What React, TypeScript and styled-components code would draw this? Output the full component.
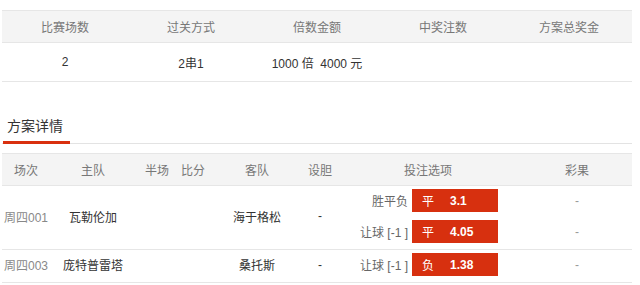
import React from "react";
import styled, { createGlobalStyle } from "styled-components";

const Global = createGlobalStyle`
  html, body { margin: 0; padding: 0; background: #fff; }
  body {
    font-family: "Liberation Sans", "Noto Sans CJK SC", sans-serif;
    font-size: 12px;
    color: #333;
  }
`;

const Page = styled.div`
  width: 630px;
  margin: 10px 8px 0 2px;
`;

const Summary = styled.div`
  border-top: 1px solid #e6e6e6;
`;

const SummaryRow = styled.div<{ $head?: boolean }>`
  display: grid;
  grid-template-columns: repeat(5, 1fr);
  height: ${(p) => (p.$head ? 31 : 38)}px;
  align-items: center;
  background: ${(p) => (p.$head ? "#f4f4f4" : "#fff")};
  border-bottom: 1px solid #e6e6e6;
  color: ${(p) => (p.$head ? "#777" : "#333")};
`;

const Cell = styled.div`
  text-align: center;
  white-space: pre;
`;

const TabBar = styled.div`
  margin-top: 24px;
  display: flex;
  border-bottom: 1px solid #e3e3e3;
`;

const Tab = styled.div`
  width: 63px;
  margin-left: 1px;
  padding: 10px 0 5px 4px;
  line-height: 20px;
  font-size: 14px;
  color: #333;
  border-bottom: 3px solid #d9300f;
  margin-bottom: -1px;
`;

const Detail = styled.div`
  margin-top: 9px;
  border-top: 1px solid #e6e6e6;
`;

const cols = "48px 86px 42px 30px 98px 28px 188px 110px";

const HeadRow = styled.div`
  display: grid;
  grid-template-columns: ${cols};
  height: 31px;
  align-items: center;
  background: #f4f4f4;
  border-bottom: 1px solid #e6e6e6;
  color: #777;
  text-align: center;
`;

const BodyRow = styled.div<{ $n: number }>`
  display: grid;
  grid-template-columns: ${cols};
  grid-template-rows: repeat(${(p) => p.$n}, 23px);
  row-gap: 8px;
  padding: 3px 0 6px;
  border-bottom: 1px solid #e6e6e6;
`;

const Span = styled.div<{ $n: number; $col: number; $tone?: "gray" | "dark" }>`
  grid-column: ${(p) => p.$col};
  grid-row: 1 / span ${(p) => p.$n};
  align-self: center;
  text-align: center;
  color: ${(p) => (p.$tone === "gray" ? "#888" : "#333")};
`;

const Bet = styled.div<{ $row: number }>`
  grid-column: 7;
  grid-row: ${(p) => p.$row};
  display: flex;
  align-items: center;
`;

const BetLabel = styled.span`
  width: 74px;
  text-align: right;
  color: #666;
  white-space: pre;
`;

const OddsBox = styled.span`
  margin-left: 4px;
  width: 86px;
  height: 23px;
  box-sizing: border-box;
  padding-left: 10px;
  display: flex;
  align-items: center;
  gap: 16px;
  background: #d7300f;
  color: #fff;
`;

const Odds = styled.b`
  font-weight: bold;
`;

const Result = styled.div<{ $row: number }>`
  grid-column: 8;
  grid-row: ${(p) => p.$row};
  align-self: center;
  text-align: center;
  color: #999;
`;

type Pick = { label: string; pick: string; odds: string };
type Match = { no: string; home: string; away: string; picks: Pick[] };

const matches: Match[] = [
  {
    no: "周四001",
    home: "瓦勒伦加",
    away: "海于格松",
    picks: [
      { label: "胜平负", pick: "平", odds: "3.1" },
      { label: "让球 [-1 ]", pick: "平", odds: "4.05" },
    ],
  },
  {
    no: "周四003",
    home: "庞特普雷塔",
    away: "桑托斯",
    picks: [{ label: "让球 [-1 ]", pick: "负", odds: "1.38" }],
  },
];

export default function App() {
  return (
    <>
      <Global />
      <Page>
        <Summary>
          <SummaryRow $head>
            <Cell>比赛场数</Cell>
            <Cell>过关方式</Cell>
            <Cell>倍数金额</Cell>
            <Cell>中奖注数</Cell>
            <Cell>方案总奖金</Cell>
          </SummaryRow>
          <SummaryRow>
            <Cell>2</Cell>
            <Cell>2串1</Cell>
            <Cell>{"1000 倍  4000 元"}</Cell>
            <Cell />
            <Cell />
          </SummaryRow>
        </Summary>

        <TabBar>
          <Tab>方案详情</Tab>
        </TabBar>

        <Detail>
          <HeadRow>
            <div>场次</div>
            <div>主队</div>
            <div>半场</div>
            <div>比分</div>
            <div>客队</div>
            <div>设胆</div>
            <div>投注选项</div>
            <div>彩果</div>
          </HeadRow>
          {matches.map((m) => {
            const n = m.picks.length;
            return (
              <BodyRow key={m.no} $n={n}>
                <Span $n={n} $col={1} $tone="gray">{m.no}</Span>
                <Span $n={n} $col={2}>{m.home}</Span>
                <Span $n={n} $col={3} />
                <Span $n={n} $col={4} />
                <Span $n={n} $col={5}>{m.away}</Span>
                <Span $n={n} $col={6}>-</Span>
                {m.picks.map((p, i) => (
                  <React.Fragment key={i}>
                    <Bet $row={i + 1}>
                      <BetLabel>{p.label}</BetLabel>
                      <OddsBox>
                        <span>{p.pick}</span>
                        <Odds>{p.odds}</Odds>
                      </OddsBox>
                    </Bet>
                    <Result $row={i + 1}>-</Result>
                  </React.Fragment>
                ))}
              </BodyRow>
            );
          })}
        </Detail>
      </Page>
    </>
  );
}
